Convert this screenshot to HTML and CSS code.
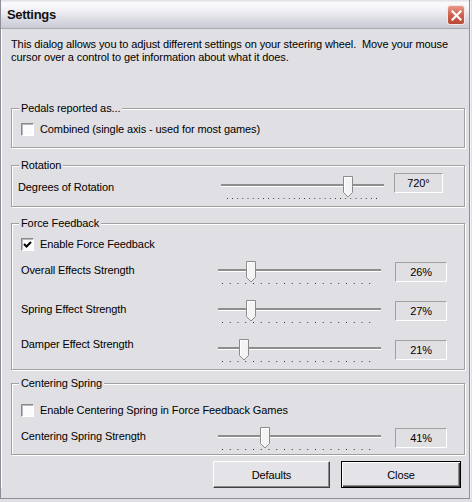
FILE: index.html
```html
<!DOCTYPE html>
<html lang="en">
<head>
    <meta charset="UTF-8">
    <title>Settings</title>
    <link rel="stylesheet" href="styles.css">
</head>
<body>
    <div class="window">
        <div class="titlebar">
            <span class="title">Settings</span>
            <span class="close-btn">
                <svg width="11" height="11" viewBox="0 0 11 11"><path d="M1.5 1.5 L9.5 9.5 M9.5 1.5 L1.5 9.5" stroke="#fff" stroke-width="2.2" stroke-linecap="square"/></svg>
            </span>
        </div>

        <div class="client">
            <p class="intro">This dialog allows you to adjust different settings on your steering wheel.&nbsp; Move your mouse<br>cursor over a control to get information about what it does.</p>

            <div class="group group-pedals">
                <span class="legend">Pedals reported as...</span>
                <label class="check"><span class="box"></span>Combined (single axis - used for most games)</label>
            </div>

            <div class="group group-rotation">
                <span class="legend">Rotation</span>
                <div class="row row-rotation">
                    <span class="row-label">Degrees of Rotation</span>
                    <div class="slider dense">
                        <div class="track"></div>
                        <div class="ticks"></div>
                        <svg class="thumb" style="left: 122px" width="11" height="22" viewBox="0 0 11 22"><path d="M0.5 0.5 H9.5 V16.5 L5 21 L0.5 16.5 Z" fill="#f4f4f4" stroke="#8c8c8c"/><path d="M1.5 16 V1.5 H8.5" fill="none" stroke="#fff"/></svg>
                    </div>
                    <span class="value">720°</span>
                </div>
            </div>

            <div class="group group-force">
                <span class="legend">Force Feedback</span>
                <label class="check"><span class="box"><svg width="9" height="9" viewBox="0 0 9 9"><path d="M1 4 L3.5 6.5 L8 2" fill="none" stroke="#000" stroke-width="2"/></svg></span>Enable Force Feedback</label>
                <div class="rows">
                    <div class="row">
                        <span class="row-label">Overall Effects Strength</span>
                        <div class="slider">
                            <div class="track"></div>
                            <div class="ticks"></div>
                            <svg class="thumb" style="left: 28px" width="11" height="22" viewBox="0 0 11 22"><path d="M0.5 0.5 H9.5 V16.5 L5 21 L0.5 16.5 Z" fill="#f4f4f4" stroke="#8c8c8c"/><path d="M1.5 16 V1.5 H8.5" fill="none" stroke="#fff"/></svg>
                        </div>
                        <span class="value">26%</span>
                    </div>
                    <div class="row">
                        <span class="row-label">Spring Effect Strength</span>
                        <div class="slider">
                            <div class="track"></div>
                            <div class="ticks"></div>
                            <svg class="thumb" style="left: 28px" width="11" height="22" viewBox="0 0 11 22"><path d="M0.5 0.5 H9.5 V16.5 L5 21 L0.5 16.5 Z" fill="#f4f4f4" stroke="#8c8c8c"/><path d="M1.5 16 V1.5 H8.5" fill="none" stroke="#fff"/></svg>
                        </div>
                        <span class="value">27%</span>
                    </div>
                    <div class="row">
                        <span class="row-label up">Damper Effect Strength</span>
                        <div class="slider">
                            <div class="track"></div>
                            <div class="ticks"></div>
                            <svg class="thumb" style="left: 21px" width="11" height="22" viewBox="0 0 11 22"><path d="M0.5 0.5 H9.5 V16.5 L5 21 L0.5 16.5 Z" fill="#f4f4f4" stroke="#8c8c8c"/><path d="M1.5 16 V1.5 H8.5" fill="none" stroke="#fff"/></svg>
                        </div>
                        <span class="value">21%</span>
                    </div>
                </div>
            </div>

            <div class="group group-centering">
                <span class="legend">Centering Spring</span>
                <label class="check"><span class="box"></span>Enable Centering Spring in Force Feedback Games</label>
                <div class="rows">
                    <div class="row">
                        <span class="row-label">Centering Spring Strength</span>
                        <div class="slider">
                            <div class="track"></div>
                            <div class="ticks"></div>
                            <svg class="thumb" style="left: 42px" width="11" height="22" viewBox="0 0 11 22"><path d="M0.5 0.5 H9.5 V16.5 L5 21 L0.5 16.5 Z" fill="#f4f4f4" stroke="#8c8c8c"/><path d="M1.5 16 V1.5 H8.5" fill="none" stroke="#fff"/></svg>
                        </div>
                        <span class="value">41%</span>
                    </div>
                </div>
            </div>

            <div class="buttons">
                <button class="btn">Defaults</button>
                <button class="btn default">Close</button>
            </div>
        </div>
    </div>
</body>
</html>
```

FILE: styles.css
```css
body {
    margin: 0;
    background: #e0dfe3;
    font-family: "Liberation Sans", Arial, sans-serif;
    font-size: 11px;
    letter-spacing: -0.1px;
    color: #000;
}
.window {
    width: 470px;
    height: 499px;
    box-sizing: border-box;
    border: 1px solid #8e8e9a;
    border-top: none;
    box-shadow: 1px 1px 0 #f4f4f8;
    background: #e0dfe3;
}
.titlebar {
    height: 28px;
    display: flex;
    align-items: center;
    justify-content: space-between;
    padding: 0 4px 0 6px;
    background: linear-gradient(#dcdce4 0, #fbfbfd 10%, #f2f2f6 35%, #dedee6 65%, #cacad6 100%);
    border-bottom: 1px solid #a8a8b4;
}
.title {
    font-size: 13px;
    font-weight: bold;
    color: #111;
    letter-spacing: -0.3px;
}
.close-btn {
    width: 18px;
    height: 20px;
    box-sizing: border-box;
    display: flex;
    align-items: center;
    justify-content: center;
    border: 1px solid #f4e6e2;
    border-radius: 3px;
    background: linear-gradient(#e89a8a, #d0604c 50%, #b84a38);
    margin-top: 2px;
}
.client {
    padding: 9px 0 0 9px;
    border-left: 1px solid #fff;
}
.intro {
    margin: 0;
    line-height: 13px;
}
.group {
    position: relative;
    width: 454px;
    box-sizing: border-box;
    border: 1px solid #a0a0a0;
    box-shadow: inset 1px 1px 0 #fff, 1px 1px 0 #fff;
}
.legend {
    position: absolute;
    top: -7px;
    left: 7px;
    padding: 0 2px;
    line-height: 13px;
    background: #e0dfe3;
}
.group-pedals {
    margin-top: 44px;
    padding: 14px 0 11px;
}
.group-rotation {
    margin-top: 17px;
    padding: 7px 0;
}
.group-force {
    margin-top: 16px;
    padding: 14px 0 7px;
}
.group-centering {
    margin-top: 13px;
    padding: 20px 0 4px;
}
.check {
    display: flex;
    align-items: center;
    gap: 6px;
    padding-left: 9px;
    height: 13px;
    line-height: 13px;
}
.box {
    width: 13px;
    height: 13px;
    box-sizing: border-box;
    display: flex;
    align-items: center;
    justify-content: center;
    background: #fbfbfb;
    border: 1px solid;
    border-color: #8a8a8a #fff #fff #8a8a8a;
    box-shadow: inset 1px 1px 0 #b8b8b8;
}
.rows {
    display: flex;
    flex-direction: column;
    gap: 17px;
    margin-top: 11px;
}
.row {
    display: grid;
    grid-template-columns: 197px 177px 52px;
    padding-left: 9px;
    height: 22px;
}
.row-rotation {
    grid-template-columns: 203px 173px 49px;
    padding-left: 6px;
    height: 26px;
}
.row-label {
    padding-top: 2px;
    line-height: 13px;
}
.row-label.up {
    padding-top: 0;
    margin-top: -2px;
}
.row-rotation .row-label {
    padding-top: 8px;
}
.slider {
    position: relative;
    width: 163px;
    height: 22px;
}
.row-rotation .slider {
    margin-top: 4px;
}
.track {
    margin-top: 7px;
    height: 2px;
    background: #8e8e8e;
    border-bottom: 1px solid #fff;
}
.ticks {
    margin: 11px 5px 0 4px;
    height: 1px;
    background-image: linear-gradient(to right, #333 1px, transparent 1px);
    background-size: 7.75px 1px;
}
.dense .ticks {
    background-size: 5.15px 1px;
    margin-left: 6px;
}
.thumb {
    position: absolute;
    top: -1px;
}
.value {
    height: 20px;
    box-sizing: border-box;
    border: 1px solid;
    border-color: #a0a0a0 #fff #fff #a0a0a0;
    text-align: center;
    line-height: 18px;
}
.buttons {
    width: 454px;
    box-sizing: border-box;
    display: flex;
    justify-content: flex-end;
    gap: 11px;
    padding-right: 4px;
    margin-top: 6px;
}
.btn {
    width: 117px;
    height: 27px;
    box-sizing: border-box;
    font-family: inherit;
    font-size: 11px;
    letter-spacing: -0.1px;
    color: #000;
    background: #e4e3e7;
    border: 1px solid;
    border-color: #fff #404040 #404040 #fff;
    box-shadow: inset -1px -1px 0 #8c8c90;
    padding: 0;
}
.btn.default {
    width: 120px;
    border: 1px solid #000;
    box-shadow: inset 1px 1px 0 #fff, inset -1px -1px 0 #404040, inset -2px -2px 0 #8c8c90;
}
```
